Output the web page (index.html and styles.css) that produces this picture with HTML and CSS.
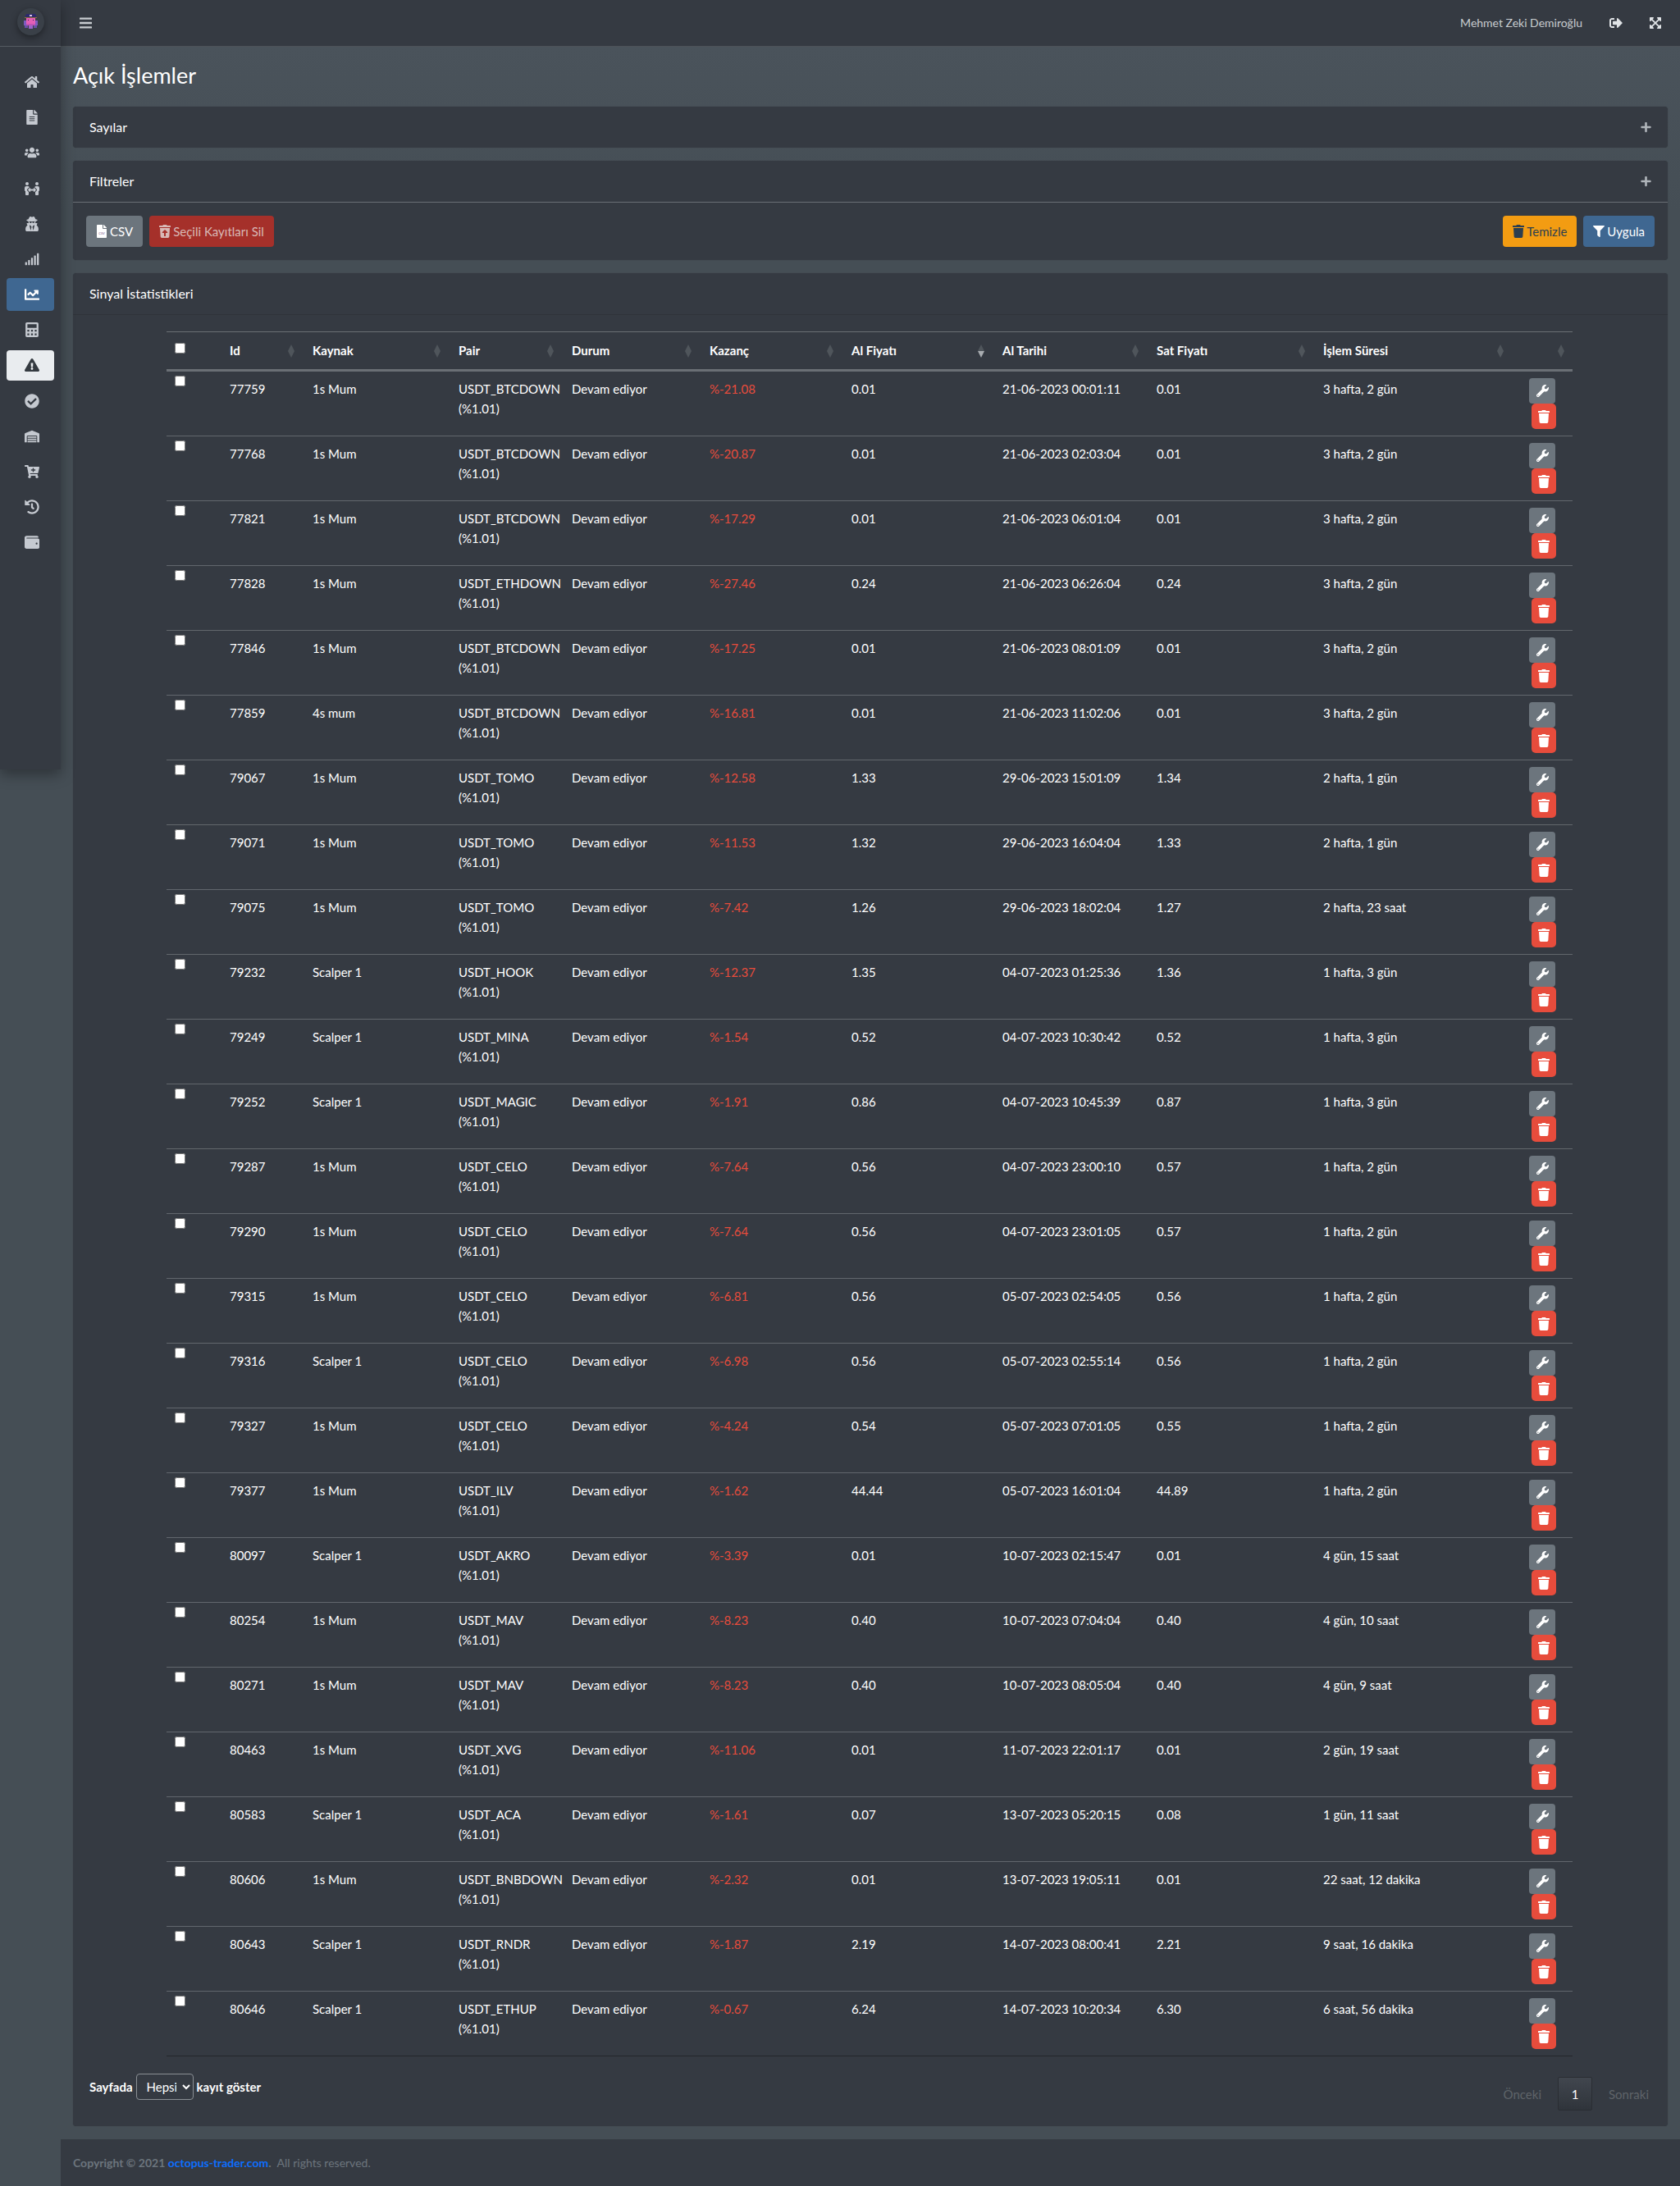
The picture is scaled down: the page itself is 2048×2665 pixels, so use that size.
FILE: index.html
```html
<!DOCTYPE html>
<html lang="tr">
<head>
<meta charset="utf-8">
<title>Açık İşlemler</title>
<link rel="stylesheet" href="styles.css">
</head>
<body>
<svg class="sprite" aria-hidden="true">
<symbol id="i-home" viewBox="0 0 576 512"><path d="M280.37 148.26L96 300.11V464a16 16 0 0 0 16 16l112.06-.29a16 16 0 0 0 15.92-16V368a16 16 0 0 1 16-16h64a16 16 0 0 1 16 16v95.64a16 16 0 0 0 16 16.05L464 480a16 16 0 0 0 16-16V300L295.67 148.26a12.19 12.19 0 0 0-15.3 0zM571.6 251.47L488 182.56V44.05a12 12 0 0 0-12-12h-56a12 12 0 0 0-12 12v72.61L318.47 43a48 48 0 0 0-61 0L4.34 251.47a12 12 0 0 0-1.6 16.9l25.5 31A12 12 0 0 0 45.15 301l235.22-193.74a12.19 12.19 0 0 1 15.3 0L530.9 301a12 12 0 0 0 16.9-1.6l25.5-31a12 12 0 0 0-1.7-16.93z"/></symbol>
<symbol id="i-file" viewBox="0 0 384 512"><path d="M224 136V0H24C10.7 0 0 10.7 0 24v464c0 13.3 10.7 24 24 24h336c13.3 0 24-10.7 24-24V160H248c-13.2 0-24-10.8-24-24zm64 236c0 6.6-5.4 12-12 12H108c-6.6 0-12-5.4-12-12v-8c0-6.6 5.4-12 12-12h168c6.6 0 12 5.4 12 12v8zm0-64c0 6.6-5.4 12-12 12H108c-6.6 0-12-5.4-12-12v-8c0-6.6 5.4-12 12-12h168c6.6 0 12 5.4 12 12v8zm0-72v8c0 6.6-5.4 12-12 12H108c-6.6 0-12-5.4-12-12v-8c0-6.6 5.4-12 12-12h168c6.6 0 12 5.4 12 12zm96-114.1v6.1H256V0h6.1c6.4 0 12.5 2.5 17 7l97.9 98c4.5 4.5 7 10.6 7 16.9z"/></symbol>
<symbol id="i-users" viewBox="0 0 640 512"><path d="M96 224c35.3 0 64-28.7 64-64s-28.7-64-64-64-64 28.7-64 64 28.7 64 64 64zm448 0c35.3 0 64-28.7 64-64s-28.7-64-64-64-64 28.7-64 64 28.7 64 64 64zm32 32h-64c-17.6 0-33.5 7.1-45.1 18.6 40.3 22.1 68.9 62 75.1 109.4h66c17.7 0 32-14.3 32-32v-32c0-35.3-28.7-64-64-64zm-256 0c61.9 0 112-50.1 112-112S381.9 32 320 32 208 82.1 208 144s50.1 112 112 112zm76.8 32h-8.3c-20.8 10-43.9 16-68.5 16s-47.6-6-68.5-16h-8.3C179.6 288 128 339.6 128 403.2V432c0 26.5 21.5 48 48 48h288c26.5 0 48-21.5 48-48v-28.8c0-63.6-51.6-115.2-115.2-115.2zm-223.7-13.4C161.5 263.1 145.6 256 128 256H64c-35.3 0-64 28.7-64 64v32c0 17.7 14.3 32 32 32h65.9c6.3-47.4 34.9-87.3 75.2-109.4z"/></symbol>
<symbol id="i-people" viewBox="0 0 576 512"><path d="M96,128A64,64,0,1,0,32,64,64,64,0,0,0,96,128Zm0,176.08a44.11,44.11,0,0,1,13.64-32L181.77,204c1.65-1.55,3.77-2.31,5.61-3.57A63.91,63.91,0,0,0,128,160H64A64,64,0,0,0,0,224V320a32,32,0,0,0,32,32V480a32,32,0,0,0,32,32h64a32,32,0,0,0,32-32V383.61l-50.36-47.53A44.08,44.08,0,0,1,96,304.08ZM480,128a64,64,0,1,0-64-64A64,64,0,0,0,480,128Zm32,32H448a63.91,63.91,0,0,0-59.38,40.42c1.84,1.27,4,2,5.62,3.59l72.12,68.06a44.37,44.37,0,0,1,0,64L416,383.62V480a32,32,0,0,0,32,32h64a32,32,0,0,0,32-32V352a32,32,0,0,0,32-32V224A64,64,0,0,0,512,160ZM444.4,295.34l-72.12-68.06A12,12,0,0,0,352,236v36H224V236a12,12,0,0,0-20.28-8.73L131.6,295.34a12.4,12.4,0,0,0,0,17.47l72.12,68.07A12,12,0,0,0,224,372.14V336H352v36.14a12,12,0,0,0,20.28,8.74l72.12-68.07A12.4,12.4,0,0,0,444.4,295.34Z"/></symbol>
<symbol id="i-secret" viewBox="0 0 448 512"><path d="M383.9 308.3l23.9-62.6c4-10.5-3.7-21.7-15-21.7h-58.5c11-18.9 17.8-40.6 17.8-64v-.3c39.2-7.8 64-19.1 64-31.7 0-13.3-27.3-25.1-70.1-33-9.2-32.8-27-65.8-40.6-82.8-9.5-11.9-25.9-15.6-39.5-8.8l-27.6 13.8c-9 4.5-19.6 4.5-28.6 0L182.1 3.4c-13.6-6.8-30-3.1-39.5 8.8-13.5 17-31.4 50-40.6 82.8-42.7 7.9-70 19.7-70 33 0 12.6 24.8 23.9 64 31.7v.3c0 23.4 6.8 45.1 17.8 64H56.3c-11.5 0-19.2 11.7-14.7 22.3l25.8 60.2C27.3 329.8 0 372.7 0 422.4v44.8C0 491.9 20.1 512 44.8 512h358.4c24.7 0 44.8-20.1 44.8-44.8v-44.8c0-48.4-25.8-90.4-64.1-114.1zM176 480l-41.6-192 49.6 32 24 40-32 120zm96 0l-32-120 24-40 49.6-32L272 480zm41.7-298.5c-3.9 11.9-7 24.6-16.5 33.4-10.1 9.3-48 22.4-64-25-2.8-8.4-15.4-8.4-18.3 0-17 50.2-56 32.4-64 25-9.5-8.8-12.7-21.5-16.5-33.4-.8-2.5-6.3-5.7-6.3-5.8v-10.8c28.3 3.6 61 5.8 96 5.8s67.7-2.2 96-5.8v10.8c-.1.1-5.6 3.2-6.4 5.8z"/></symbol>
<symbol id="i-signal" viewBox="0 0 640 512"><path d="M216 288h-48c-8.84 0-16 7.16-16 16v192c0 8.84 7.16 16 16 16h48c8.84 0 16-7.16 16-16V304c0-8.84-7.16-16-16-16zM88 384H40c-8.84 0-16 7.16-16 16v96c0 8.84 7.16 16 16 16h48c8.84 0 16-7.16 16-16v-96c0-8.84-7.16-16-16-16zm256-192h-48c-8.84 0-16 7.16-16 16v288c0 8.84 7.16 16 16 16h48c8.84 0 16-7.16 16-16V208c0-8.84-7.16-16-16-16zm128-96h-48c-8.84 0-16 7.16-16 16v384c0 8.84 7.16 16 16 16h48c8.84 0 16-7.16 16-16V112c0-8.84-7.16-16-16-16zM600 0h-48c-8.84 0-16 7.16-16 16v480c0 8.84 7.16 16 16 16h48c8.84 0 16-7.16 16-16V16c0-8.84-7.16-16-16-16z"/></symbol>
<symbol id="i-chart" viewBox="0 0 512 512"><path d="M496 384H64V80c0-8.84-7.16-16-16-16H16C7.16 64 0 71.16 0 80v336c0 17.67 14.33 32 32 32h464c8.84 0 16-7.16 16-16v-32c0-8.84-7.16-16-16-16zM464 96H345.94c-21.38 0-32.09 25.85-16.97 40.97l32.4 32.4L288 242.75l-73.37-73.37c-12.5-12.5-32.76-12.5-45.25 0l-68.69 68.69c-6.25 6.25-6.25 16.38 0 22.63l22.62 22.62c6.25 6.25 16.38 6.25 22.63 0L192 237.25l73.37 73.37c12.5 12.5 32.76 12.5 45.25 0l96-96 32.4 32.4c15.12 15.12 40.97 4.41 40.97-16.97V112c0-8.84-7.16-16-16-16z"/></symbol>
<symbol id="i-calc" viewBox="0 0 448 512"><path fill-rule="evenodd" d="M48 0h352c25.6 0 48 22.4 48 48v416c0 25.6-22.4 48-48 48H48c-25.6 0-48-22.4-48-48V48C0 22.4 22.4 0 48 0zm16 64v128h320V64zm0 192v64h64v-64zm128 0v64h64v-64zm128 0v64h64v-64zM64 384v64h64v-64zm128 0v64h64v-64zm128 0v64h64v-64z"/></symbol>
<symbol id="i-warn" viewBox="0 0 576 512"><path d="M569.517 440.013C587.975 472.007 564.806 512 527.94 512H48.054c-36.937 0-59.999-40.055-41.577-71.987L246.423 23.985c18.467-32.009 64.72-31.951 83.154 0l239.94 416.028zM288 354c-25.405 0-46 20.595-46 46s20.595 46 46 46 46-20.595 46-46-20.595-46-46-46zm-43.673-165.346l7.418 136c.347 6.364 5.609 11.346 11.982 11.346h48.546c6.373 0 11.635-4.982 11.982-11.346l7.418-136c.375-6.874-5.098-12.654-11.982-12.654h-63.383c-6.884 0-12.356 5.78-11.981 12.654z"/></symbol>
<symbol id="i-check" viewBox="0 0 512 512"><path d="M504 256c0 136.967-111.033 248-248 248S8 392.967 8 256 119.033 8 256 8s248 111.033 248 248zM227.314 387.314l184-184c6.248-6.248 6.248-16.379 0-22.627l-22.627-22.627c-6.248-6.249-16.379-6.249-22.628 0L216 308.118l-70.059-70.059c-6.248-6.248-16.379-6.248-22.628 0l-22.627 22.627c-6.248 6.248-6.248 16.379 0 22.627l104 104c6.249 6.249 16.379 6.249 22.628.001z"/></symbol>
<symbol id="i-warehouse" viewBox="0 0 640 512"><path d="M504 352H136.4c-4.4 0-8 3.6-8 8l-.1 48c0 4.4 3.6 8 8 8H504c4.4 0 8-3.6 8-8v-48c0-4.4-3.6-8-8-8zm0 96H136.1c-4.4 0-8 3.6-8 8l-.1 48c0 4.4 3.6 8 8 8h368c4.4 0 8-3.6 8-8v-48c0-4.4-3.6-8-8-8zm0-192H136.6c-4.4 0-8 3.6-8 8l-.1 48c0 4.4 3.6 8 8 8H504c4.4 0 8-3.6 8-8v-48c0-4.4-3.6-8-8-8zm106.5-139L338.4 3.7a48.15 48.15 0 0 0-36.9 0L29.5 117C11.7 124.5 0 141.9 0 161.3V504c0 4.4 3.6 8 8 8h80c4.4 0 8-3.6 8-8V256c0-17.6 14.6-32 32.6-32h382.8c18 0 32.6 14.4 32.6 32v248c0 4.4 3.6 8 8 8h80c4.4 0 8-3.6 8-8V161.3c0-19.4-11.7-36.8-29.5-44.3z"/></symbol>
<symbol id="i-cart" viewBox="0 0 576 512"><path d="M504.717 320H211.572l6.545 32h268.418c15.401 0 26.816 14.301 23.403 29.319l-5.517 24.276C523.112 414.668 536 433.828 536 456c0 31.202-25.519 56.444-56.824 55.994-29.823-.429-54.35-24.631-55.155-54.447-.44-16.287 6.085-31.049 16.803-41.548H231.176C241.553 426.165 248 440.326 248 456c0 31.813-26.528 57.431-58.67 55.938-28.54-1.325-51.751-24.385-53.251-52.917-1.158-22.034 10.436-41.455 28.051-51.586L93.883 64H24C10.745 64 0 53.255 0 40V24C0 10.745 10.745 0 24 0h102.529c11.401 0 21.228 8.021 23.513 19.19L159.208 64H551.99c15.401 0 26.816 14.301 23.403 29.319l-47.273 208C525.637 312.246 515.923 320 504.717 320zM408 168h-48v-40c0-8.837-7.163-16-16-16h-16c-8.837 0-16 7.163-16 16v40h-48c-8.837 0-16 7.163-16 16v16c0 8.837 7.163 16 16 16h48v40c0 8.837 7.163 16 16 16h16c8.837 0 16-7.163 16-16v-40h48c8.837 0 16-7.163 16-16v-16c0-8.837-7.163-16-16-16z"/></symbol>
<symbol id="i-history" viewBox="0 0 512 512"><path d="M504 255.531c.253 136.64-111.18 248.372-247.82 248.468-59.015.042-113.223-20.53-155.822-54.911-11.077-8.94-11.905-25.541-1.839-35.607l11.267-11.267c8.609-8.609 22.353-9.551 31.891-1.984C173.062 425.135 212.781 440 256 440c101.705 0 184-82.311 184-184 0-101.705-82.311-184-184-184-48.814 0-93.149 18.969-126.068 49.932l50.754 50.754c10.08 10.08 2.941 27.314-11.313 27.314H24c-8.837 0-16-7.163-16-16V38.627c0-14.254 17.234-21.393 27.314-11.314l49.372 49.372C129.209 34.136 189.552 8 256 8c136.81 0 247.747 110.78 248 247.531zm-180.912 78.784l9.823-12.63c8.138-10.463 6.253-25.542-4.21-33.679L288 256.349V152c0-13.255-10.745-24-24-24h-16c-13.255 0-24 10.745-24 24v135.651l65.409 50.874c10.463 8.137 25.541 6.253 33.679-4.21z"/></symbol>
<symbol id="i-wallet" viewBox="0 0 512 512"><path d="M461.2 128H80c-8.84 0-16-7.16-16-16s7.16-16 16-16h384c8.84 0 16-7.16 16-16 0-26.51-21.49-48-48-48H64C28.65 32 0 60.65 0 96v320c0 35.35 28.65 64 64 64h397.2c28.02 0 50.8-21.53 50.8-48V176c0-26.47-22.78-48-50.8-48zM416 336c-17.67 0-32-14.33-32-32s14.33-32 32-32 32 14.33 32 32-14.33 32-32 32z"/></symbol>
<symbol id="i-bars" viewBox="0 0 448 512"><path d="M16 132h416c8.837 0 16-7.163 16-16V76c0-8.837-7.163-16-16-16H16C7.163 60 0 67.163 0 76v40c0 8.837 7.163 16 16 16zm0 160h416c8.837 0 16-7.163 16-16v-40c0-8.837-7.163-16-16-16H16c-8.837 0-16 7.163-16 16v40c0 8.837 7.163 16 16 16zm0 160h416c8.837 0 16-7.163 16-16v-40c0-8.837-7.163-16-16-16H16c-8.837 0-16 7.163-16 16v40c0 8.837 7.163 16 16 16z"/></symbol>
<symbol id="i-signout" viewBox="0 0 512 512"><path d="M497 273L329 441c-15 15-41 4.5-41-17v-96H152c-13.3 0-24-10.7-24-24v-96c0-13.3 10.7-24 24-24h136V88c0-21.4 25.9-32 41-17l168 168c9.3 9.4 9.3 24.6 0 34zM192 436v-40c0-6.6-5.4-12-12-12H96c-17.7 0-32-14.3-32-32V160c0-17.7 14.3-32 32-32h84c6.6 0 12-5.4 12-12V76c0-6.6-5.4-12-12-12H96c-53 0-96 43-96 96v192c0 53 43 96 96 96h84c6.6 0 12-5.4 12-12z"/></symbol>
<symbol id="i-expand" viewBox="0 0 448 512"><path d="M448 344v112a23.94 23.94 0 0 1-24 24H312c-21.39 0-32.09-25.9-17-41l36.2-36.2L224 295.6 116.77 402.9 153 439c15.09 15.1 4.39 41-17 41H24a23.94 23.94 0 0 1-24-24V344c0-21.4 25.89-32.1 41-17l36.19 36.2L184.46 256 77.18 148.7 41 185c-15.1 15.1-41 4.4-41-17V56a23.94 23.94 0 0 1 24-24h112c21.39 0 32.09 25.9 17 41l-36.2 36.2L224 216.4l107.23-107.3L295 73c-15.09-15.1-4.39-41 17-41h112a23.94 23.94 0 0 1 24 24v112c0 21.4-25.89 32.1-41 17l-36.19-36.2L263.54 256l107.28 107.3L407 327.1c15.1-15.2 41-4.5 41 16.9z"/></symbol>
<symbol id="i-plus" viewBox="0 0 448 512"><path d="M416 208H272V64c0-17.67-14.33-32-32-32h-32c-17.67 0-32 14.33-32 32v144H32c-17.67 0-32 14.33-32 32v32c0 17.67 14.33 32 32 32h144v144c0 17.67 14.33 32 32 32h32c17.67 0 32-14.33 32-32V304h144c17.67 0 32-14.33 32-32v-32c0-17.67-14.33-32-32-32z"/></symbol>
<symbol id="i-trash" viewBox="0 0 448 512"><path d="M432 32H312l-9.4-18.7A24 24 0 0 0 281.1 0H166.8a23.72 23.72 0 0 0-21.4 13.3L136 32H16A16 16 0 0 0 0 48v32a16 16 0 0 0 16 16h416a16 16 0 0 0 16-16V48a16 16 0 0 0-16-16zM53.2 467a48 48 0 0 0 47.9 45h245.8a48 48 0 0 0 47.9-45L416 128H32z"/></symbol>
<symbol id="i-restore" viewBox="0 0 448 512"><path d="M53.2 467a48 48 0 0 0 47.9 45h245.8a48 48 0 0 0 47.9-45L416 128H32zm70.11-175.8l89.38-94.26a15.41 15.41 0 0 1 22.62 0l89.38 94.26c10.08 10.62 2.94 28.8-11.32 28.8H256v112a16 16 0 0 1-16 16h-32a16 16 0 0 1-16-16V320h-57.37c-14.26 0-21.4-18.18-11.32-28.8zM432 32H312l-9.4-18.7A24 24 0 0 0 281.1 0H166.8a23.72 23.72 0 0 0-21.4 13.3L136 32H16A16 16 0 0 0 0 48v32a16 16 0 0 0 16 16h416a16 16 0 0 0 16-16V48a16 16 0 0 0-16-16z"/></symbol>
<symbol id="i-filter" viewBox="0 0 512 512"><path d="M487.976 0H24.028C2.71 0-8.047 25.866 7.058 40.971L192 225.941V432c0 7.831 3.821 15.17 10.237 19.662l80 55.98C298.02 518.69 320 507.493 320 487.98V225.941l184.947-184.97C520.021 25.896 509.338 0 487.976 0z"/></symbol>
<symbol id="i-wrench" viewBox="0 0 512 512"><path d="M507.73 109.1c-2.24-9.03-13.54-12.09-20.12-5.51l-74.36 74.36-67.88-11.31-11.31-67.88 74.36-74.36c6.62-6.62 3.43-17.9-5.66-20.16-47.38-11.74-99.55.91-136.58 37.93-39.64 39.64-50.55 97.1-34.05 147.2L18.74 402.76c-24.99 24.99-24.99 65.51 0 90.5 24.99 24.99 65.51 24.99 90.5 0l213.21-213.21c50.12 16.71 107.47 5.68 147.37-34.22 37.07-37.07 49.7-89.32 37.91-136.73zM64 472c-13.25 0-24-10.75-24-24 0-13.26 10.75-24 24-24s24 10.74 24 24c0 13.25-10.75 24-24 24z"/></symbol>
</svg>
<div class="shell">
<aside class="sidebar">
<div class="brand">
<div class="logo">
<svg class="octopus" viewBox="0 0 16 18" shape-rendering="crispEdges">
<rect x="3" y="0" width="10" height="1" fill="#2d2a6b"/><rect x="2" y="1" width="12" height="3" fill="#2d2a6b"/><rect x="7" y="1" width="2" height="2" fill="#d9c3e8"/><rect x="1" y="4" width="14" height="1" fill="#8d6a3f"/>
<rect x="3" y="5" width="10" height="6" fill="#e45fb6"/><rect x="5" y="7" width="1" height="1" fill="#26224f"/><rect x="10" y="7" width="1" height="1" fill="#26224f"/>
<rect x="2" y="11" width="12" height="2" fill="#c253b4"/><rect x="0" y="8" width="3" height="5" fill="#7d5bc0"/><rect x="13" y="8" width="3" height="5" fill="#7d5bc0"/>
<rect x="1" y="13" width="4" height="3" fill="#6a4fa8"/><rect x="6" y="13" width="4" height="4" fill="#9d63c8"/><rect x="11" y="13" width="4" height="3" fill="#6a4fa8"/>
</svg>
</div>
</div>
<nav class="side-nav">
<a class="nav-item"><svg class="ico"><use href="#i-home"/></svg></a>
<a class="nav-item"><svg class="ico"><use href="#i-file"/></svg></a>
<a class="nav-item"><svg class="ico"><use href="#i-users"/></svg></a>
<a class="nav-item"><svg class="ico"><use href="#i-people"/></svg></a>
<a class="nav-item"><svg class="ico"><use href="#i-secret"/></svg></a>
<a class="nav-item"><svg class="ico"><use href="#i-signal"/></svg></a>
<a class="nav-item nav-blue"><svg class="ico"><use href="#i-chart"/></svg></a>
<a class="nav-item"><svg class="ico"><use href="#i-calc"/></svg></a>
<a class="nav-item nav-light"><svg class="ico"><use href="#i-warn"/></svg></a>
<a class="nav-item"><svg class="ico"><use href="#i-check"/></svg></a>
<a class="nav-item"><svg class="ico"><use href="#i-warehouse"/></svg></a>
<a class="nav-item"><svg class="ico"><use href="#i-cart"/></svg></a>
<a class="nav-item"><svg class="ico"><use href="#i-history"/></svg></a>
<a class="nav-item"><svg class="ico"><use href="#i-wallet"/></svg></a>
</nav>
</aside>
<div class="main">
<header class="topbar">
<svg class="ico bars"><use href="#i-bars"/></svg>
<div class="top-right">
<span class="user">Mehmet Zeki Demiroğlu</span>
<svg class="ico top-ico"><use href="#i-signout"/></svg>
<svg class="ico top-ico"><use href="#i-expand"/></svg>
</div>
</header>
<main class="content">
<h1 class="page-title">Açık İşlemler</h1>
<section class="card">
<div class="card-head head-plain"><span>Sayılar</span><svg class="ico plus"><use href="#i-plus"/></svg></div>
</section>
<section class="card">
<div class="card-head head-line"><span>Filtreler</span><svg class="ico plus"><use href="#i-plus"/></svg></div>
<div class="toolbar">
<div class="btn-group">
<button class="btn btn-gray"><svg class="ico btn-ico" viewBox="0 0 384 512"><path d="M224 136V0H24C10.7 0 0 10.7 0 24v464c0 13.3 10.7 24 24 24h336c13.3 0 24-10.7 24-24V160H248c-13.2 0-24-10.8-24-24zm160-14.1v6.1H256V0h6.1c6.4 0 12.5 2.5 17 7l97.9 98c4.5 4.5 7 10.6 7 16.9z" fill="#fff"/><text x="192" y="370" class="csv-mini">CSV</text></svg>CSV</button>
<button class="btn btn-red"><svg class="ico btn-ico"><use href="#i-restore"/></svg>Seçili Kayıtları Sil</button>
</div>
<div class="btn-group">
<button class="btn btn-amber"><svg class="ico btn-ico"><use href="#i-trash"/></svg>Temizle</button>
<button class="btn btn-blue"><svg class="ico btn-ico"><use href="#i-filter"/></svg>Uygula</button>
</div>
</div>
</section>
<section class="card card-table">
<div class="card-head head-dark"><span>Sinyal İstatistikleri</span></div>
<div class="table-wrap">
<table class="data">
<colgroup><col class="c-chk"><col class="c-id"><col class="c-src"><col class="c-pair"><col class="c-state"><col class="c-gain"><col class="c-buy"><col class="c-date"><col class="c-sell"><col class="c-dur"><col class="c-act"></colgroup>
<thead>
<tr><th class="th-chk"><input type="checkbox"></th><th>Id</th><th>Kaynak</th><th>Pair</th><th>Durum</th><th>Kazanç</th><th class="sorted">Al Fiyatı</th><th>Al Tarihi</th><th>Sat Fiyatı</th><th>İşlem Süresi</th><th></th></tr>
</thead>
<tbody>
<tr><td class="td-chk"><input type="checkbox"></td><td>77759</td><td>1s Mum</td><td>USDT_BTCDOWN<br>(%1.01)</td><td>Devam ediyor</td><td class="neg">%-21.08</td><td>0.01</td><td>21-06-2023 00:01:11</td><td>0.01</td><td>3 hafta, 2 gün</td><td class="acts"><a class="act act-w"><svg class="ico"><use href="#i-wrench"/></svg></a><a class="act act-t"><svg class="ico"><use href="#i-trash"/></svg></a></td></tr>
<tr><td class="td-chk"><input type="checkbox"></td><td>77768</td><td>1s Mum</td><td>USDT_BTCDOWN<br>(%1.01)</td><td>Devam ediyor</td><td class="neg">%-20.87</td><td>0.01</td><td>21-06-2023 02:03:04</td><td>0.01</td><td>3 hafta, 2 gün</td><td class="acts"><a class="act act-w"><svg class="ico"><use href="#i-wrench"/></svg></a><a class="act act-t"><svg class="ico"><use href="#i-trash"/></svg></a></td></tr>
<tr><td class="td-chk"><input type="checkbox"></td><td>77821</td><td>1s Mum</td><td>USDT_BTCDOWN<br>(%1.01)</td><td>Devam ediyor</td><td class="neg">%-17.29</td><td>0.01</td><td>21-06-2023 06:01:04</td><td>0.01</td><td>3 hafta, 2 gün</td><td class="acts"><a class="act act-w"><svg class="ico"><use href="#i-wrench"/></svg></a><a class="act act-t"><svg class="ico"><use href="#i-trash"/></svg></a></td></tr>
<tr><td class="td-chk"><input type="checkbox"></td><td>77828</td><td>1s Mum</td><td>USDT_ETHDOWN<br>(%1.01)</td><td>Devam ediyor</td><td class="neg">%-27.46</td><td>0.24</td><td>21-06-2023 06:26:04</td><td>0.24</td><td>3 hafta, 2 gün</td><td class="acts"><a class="act act-w"><svg class="ico"><use href="#i-wrench"/></svg></a><a class="act act-t"><svg class="ico"><use href="#i-trash"/></svg></a></td></tr>
<tr><td class="td-chk"><input type="checkbox"></td><td>77846</td><td>1s Mum</td><td>USDT_BTCDOWN<br>(%1.01)</td><td>Devam ediyor</td><td class="neg">%-17.25</td><td>0.01</td><td>21-06-2023 08:01:09</td><td>0.01</td><td>3 hafta, 2 gün</td><td class="acts"><a class="act act-w"><svg class="ico"><use href="#i-wrench"/></svg></a><a class="act act-t"><svg class="ico"><use href="#i-trash"/></svg></a></td></tr>
<tr><td class="td-chk"><input type="checkbox"></td><td>77859</td><td>4s mum</td><td>USDT_BTCDOWN<br>(%1.01)</td><td>Devam ediyor</td><td class="neg">%-16.81</td><td>0.01</td><td>21-06-2023 11:02:06</td><td>0.01</td><td>3 hafta, 2 gün</td><td class="acts"><a class="act act-w"><svg class="ico"><use href="#i-wrench"/></svg></a><a class="act act-t"><svg class="ico"><use href="#i-trash"/></svg></a></td></tr>
<tr><td class="td-chk"><input type="checkbox"></td><td>79067</td><td>1s Mum</td><td>USDT_TOMO<br>(%1.01)</td><td>Devam ediyor</td><td class="neg">%-12.58</td><td>1.33</td><td>29-06-2023 15:01:09</td><td>1.34</td><td>2 hafta, 1 gün</td><td class="acts"><a class="act act-w"><svg class="ico"><use href="#i-wrench"/></svg></a><a class="act act-t"><svg class="ico"><use href="#i-trash"/></svg></a></td></tr>
<tr><td class="td-chk"><input type="checkbox"></td><td>79071</td><td>1s Mum</td><td>USDT_TOMO<br>(%1.01)</td><td>Devam ediyor</td><td class="neg">%-11.53</td><td>1.32</td><td>29-06-2023 16:04:04</td><td>1.33</td><td>2 hafta, 1 gün</td><td class="acts"><a class="act act-w"><svg class="ico"><use href="#i-wrench"/></svg></a><a class="act act-t"><svg class="ico"><use href="#i-trash"/></svg></a></td></tr>
<tr><td class="td-chk"><input type="checkbox"></td><td>79075</td><td>1s Mum</td><td>USDT_TOMO<br>(%1.01)</td><td>Devam ediyor</td><td class="neg">%-7.42</td><td>1.26</td><td>29-06-2023 18:02:04</td><td>1.27</td><td>2 hafta, 23 saat</td><td class="acts"><a class="act act-w"><svg class="ico"><use href="#i-wrench"/></svg></a><a class="act act-t"><svg class="ico"><use href="#i-trash"/></svg></a></td></tr>
<tr><td class="td-chk"><input type="checkbox"></td><td>79232</td><td>Scalper 1</td><td>USDT_HOOK<br>(%1.01)</td><td>Devam ediyor</td><td class="neg">%-12.37</td><td>1.35</td><td>04-07-2023 01:25:36</td><td>1.36</td><td>1 hafta, 3 gün</td><td class="acts"><a class="act act-w"><svg class="ico"><use href="#i-wrench"/></svg></a><a class="act act-t"><svg class="ico"><use href="#i-trash"/></svg></a></td></tr>
<tr><td class="td-chk"><input type="checkbox"></td><td>79249</td><td>Scalper 1</td><td>USDT_MINA<br>(%1.01)</td><td>Devam ediyor</td><td class="neg">%-1.54</td><td>0.52</td><td>04-07-2023 10:30:42</td><td>0.52</td><td>1 hafta, 3 gün</td><td class="acts"><a class="act act-w"><svg class="ico"><use href="#i-wrench"/></svg></a><a class="act act-t"><svg class="ico"><use href="#i-trash"/></svg></a></td></tr>
<tr><td class="td-chk"><input type="checkbox"></td><td>79252</td><td>Scalper 1</td><td>USDT_MAGIC<br>(%1.01)</td><td>Devam ediyor</td><td class="neg">%-1.91</td><td>0.86</td><td>04-07-2023 10:45:39</td><td>0.87</td><td>1 hafta, 3 gün</td><td class="acts"><a class="act act-w"><svg class="ico"><use href="#i-wrench"/></svg></a><a class="act act-t"><svg class="ico"><use href="#i-trash"/></svg></a></td></tr>
<tr><td class="td-chk"><input type="checkbox"></td><td>79287</td><td>1s Mum</td><td>USDT_CELO<br>(%1.01)</td><td>Devam ediyor</td><td class="neg">%-7.64</td><td>0.56</td><td>04-07-2023 23:00:10</td><td>0.57</td><td>1 hafta, 2 gün</td><td class="acts"><a class="act act-w"><svg class="ico"><use href="#i-wrench"/></svg></a><a class="act act-t"><svg class="ico"><use href="#i-trash"/></svg></a></td></tr>
<tr><td class="td-chk"><input type="checkbox"></td><td>79290</td><td>1s Mum</td><td>USDT_CELO<br>(%1.01)</td><td>Devam ediyor</td><td class="neg">%-7.64</td><td>0.56</td><td>04-07-2023 23:01:05</td><td>0.57</td><td>1 hafta, 2 gün</td><td class="acts"><a class="act act-w"><svg class="ico"><use href="#i-wrench"/></svg></a><a class="act act-t"><svg class="ico"><use href="#i-trash"/></svg></a></td></tr>
<tr><td class="td-chk"><input type="checkbox"></td><td>79315</td><td>1s Mum</td><td>USDT_CELO<br>(%1.01)</td><td>Devam ediyor</td><td class="neg">%-6.81</td><td>0.56</td><td>05-07-2023 02:54:05</td><td>0.56</td><td>1 hafta, 2 gün</td><td class="acts"><a class="act act-w"><svg class="ico"><use href="#i-wrench"/></svg></a><a class="act act-t"><svg class="ico"><use href="#i-trash"/></svg></a></td></tr>
<tr><td class="td-chk"><input type="checkbox"></td><td>79316</td><td>Scalper 1</td><td>USDT_CELO<br>(%1.01)</td><td>Devam ediyor</td><td class="neg">%-6.98</td><td>0.56</td><td>05-07-2023 02:55:14</td><td>0.56</td><td>1 hafta, 2 gün</td><td class="acts"><a class="act act-w"><svg class="ico"><use href="#i-wrench"/></svg></a><a class="act act-t"><svg class="ico"><use href="#i-trash"/></svg></a></td></tr>
<tr><td class="td-chk"><input type="checkbox"></td><td>79327</td><td>1s Mum</td><td>USDT_CELO<br>(%1.01)</td><td>Devam ediyor</td><td class="neg">%-4.24</td><td>0.54</td><td>05-07-2023 07:01:05</td><td>0.55</td><td>1 hafta, 2 gün</td><td class="acts"><a class="act act-w"><svg class="ico"><use href="#i-wrench"/></svg></a><a class="act act-t"><svg class="ico"><use href="#i-trash"/></svg></a></td></tr>
<tr><td class="td-chk"><input type="checkbox"></td><td>79377</td><td>1s Mum</td><td>USDT_ILV<br>(%1.01)</td><td>Devam ediyor</td><td class="neg">%-1.62</td><td>44.44</td><td>05-07-2023 16:01:04</td><td>44.89</td><td>1 hafta, 2 gün</td><td class="acts"><a class="act act-w"><svg class="ico"><use href="#i-wrench"/></svg></a><a class="act act-t"><svg class="ico"><use href="#i-trash"/></svg></a></td></tr>
<tr><td class="td-chk"><input type="checkbox"></td><td>80097</td><td>Scalper 1</td><td>USDT_AKRO<br>(%1.01)</td><td>Devam ediyor</td><td class="neg">%-3.39</td><td>0.01</td><td>10-07-2023 02:15:47</td><td>0.01</td><td>4 gün, 15 saat</td><td class="acts"><a class="act act-w"><svg class="ico"><use href="#i-wrench"/></svg></a><a class="act act-t"><svg class="ico"><use href="#i-trash"/></svg></a></td></tr>
<tr><td class="td-chk"><input type="checkbox"></td><td>80254</td><td>1s Mum</td><td>USDT_MAV<br>(%1.01)</td><td>Devam ediyor</td><td class="neg">%-8.23</td><td>0.40</td><td>10-07-2023 07:04:04</td><td>0.40</td><td>4 gün, 10 saat</td><td class="acts"><a class="act act-w"><svg class="ico"><use href="#i-wrench"/></svg></a><a class="act act-t"><svg class="ico"><use href="#i-trash"/></svg></a></td></tr>
<tr><td class="td-chk"><input type="checkbox"></td><td>80271</td><td>1s Mum</td><td>USDT_MAV<br>(%1.01)</td><td>Devam ediyor</td><td class="neg">%-8.23</td><td>0.40</td><td>10-07-2023 08:05:04</td><td>0.40</td><td>4 gün, 9 saat</td><td class="acts"><a class="act act-w"><svg class="ico"><use href="#i-wrench"/></svg></a><a class="act act-t"><svg class="ico"><use href="#i-trash"/></svg></a></td></tr>
<tr><td class="td-chk"><input type="checkbox"></td><td>80463</td><td>1s Mum</td><td>USDT_XVG<br>(%1.01)</td><td>Devam ediyor</td><td class="neg">%-11.06</td><td>0.01</td><td>11-07-2023 22:01:17</td><td>0.01</td><td>2 gün, 19 saat</td><td class="acts"><a class="act act-w"><svg class="ico"><use href="#i-wrench"/></svg></a><a class="act act-t"><svg class="ico"><use href="#i-trash"/></svg></a></td></tr>
<tr><td class="td-chk"><input type="checkbox"></td><td>80583</td><td>Scalper 1</td><td>USDT_ACA<br>(%1.01)</td><td>Devam ediyor</td><td class="neg">%-1.61</td><td>0.07</td><td>13-07-2023 05:20:15</td><td>0.08</td><td>1 gün, 11 saat</td><td class="acts"><a class="act act-w"><svg class="ico"><use href="#i-wrench"/></svg></a><a class="act act-t"><svg class="ico"><use href="#i-trash"/></svg></a></td></tr>
<tr><td class="td-chk"><input type="checkbox"></td><td>80606</td><td>1s Mum</td><td>USDT_BNBDOWN<br>(%1.01)</td><td>Devam ediyor</td><td class="neg">%-2.32</td><td>0.01</td><td>13-07-2023 19:05:11</td><td>0.01</td><td>22 saat, 12 dakika</td><td class="acts"><a class="act act-w"><svg class="ico"><use href="#i-wrench"/></svg></a><a class="act act-t"><svg class="ico"><use href="#i-trash"/></svg></a></td></tr>
<tr><td class="td-chk"><input type="checkbox"></td><td>80643</td><td>Scalper 1</td><td>USDT_RNDR<br>(%1.01)</td><td>Devam ediyor</td><td class="neg">%-1.87</td><td>2.19</td><td>14-07-2023 08:00:41</td><td>2.21</td><td>9 saat, 16 dakika</td><td class="acts"><a class="act act-w"><svg class="ico"><use href="#i-wrench"/></svg></a><a class="act act-t"><svg class="ico"><use href="#i-trash"/></svg></a></td></tr>
<tr><td class="td-chk"><input type="checkbox"></td><td>80646</td><td>Scalper 1</td><td>USDT_ETHUP<br>(%1.01)</td><td>Devam ediyor</td><td class="neg">%-0.67</td><td>6.24</td><td>14-07-2023 10:20:34</td><td>6.30</td><td>6 saat, 56 dakika</td><td class="acts"><a class="act act-w"><svg class="ico"><use href="#i-wrench"/></svg></a><a class="act act-t"><svg class="ico"><use href="#i-trash"/></svg></a></td></tr>
</tbody>
</table>
</div>
<div class="table-foot">
<label class="page-len">Sayfada <select class="len-select"><option>Hepsi</option></select> kayıt göster</label>
<div class="pager"><span class="pg-link">Önceki</span><span class="pg-cur">1</span><span class="pg-link">Sonraki</span></div>
</div>
</section>
</main>
<footer class="foot"><b>Copyright © 2021 <a class="foot-link">octopus-trader.com</a>.</b> All rights reserved.</footer>
</div>
</div>
</body>
</html>
```
FILE: styles.css
```css
* { box-sizing: border-box; }
html, body { margin: 0; padding: 0; }
body {
  background: #454e55;
  color: #fff;
  font-family: "Lato", "Liberation Sans", sans-serif;
  font-size: 15px;
  line-height: 24px;
}
.sprite { display: none; }
.ico { display: inline-block; width: 18px; height: 18px; fill: currentColor; }
.shell { display: flex; align-items: flex-start; width: 2048px; height: 2665px; overflow: hidden; }

.sidebar {
  position: relative;
  z-index: 2;
  flex: 0 0 74px;
  height: 938px;
  background: #353a42;
  box-shadow: 0 6px 16px rgba(0, 0, 0, .35);
}
.brand { height: 57px; border-bottom: 1px solid #555b62; display: flex; justify-content: center; align-items: flex-start; padding-top: 10px; }
.logo { width: 33px; height: 33px; border-radius: 50%; background: #3a4048; box-shadow: 0 3px 8px rgba(0, 0, 0, .4); display: flex; align-items: center; justify-content: center; }
.octopus { width: 17px; height: 19px; }
.side-nav { display: flex; flex-direction: column; gap: 3.2px; padding: 23px 8px 0; }
.nav-item { height: 40px; border-radius: 4px; display: flex; align-items: center; justify-content: center; color: #c5c9d0; padding-left: 3px; }
.nav-blue { background: #3f6791; color: #fff; }
.nav-light { background: #e9ecef; color: #343a40; height: 37px; margin: 1px 0 2px; }

.main { flex: 1; min-width: 0; height: 2665px; display: flex; flex-direction: column; }
.topbar { flex: 0 0 57px; background: #353a42; border-bottom: 1px solid #4d5359; display: flex; align-items: center; justify-content: space-between; padding: 0 22px 1px 23px; }
.bars { width: 15px; height: 18px; color: #c8ccd0; }
.top-right { display: flex; align-items: center; color: #c8ccd0; }
.user { font-size: 14px; margin-right: 33px; }
.top-ico { width: 16px; height: 16px; margin-left: 32px; color: #e0e3e6; }
.top-ico:first-of-type { margin-left: 0; }

.content { flex: 1; padding: 0 15px; display: flex; flex-direction: column; gap: 16px; background: linear-gradient(#4a535b, #454e55 200px); }
.page-title { margin: 0; height: 57px; padding-top: 18px; font-size: 27px; font-weight: 400; line-height: 34px; margin-bottom: 0; }
.card { background: #353a42; border-radius: 4px; box-shadow: 0 0 1px rgba(0, 0, 0, .3); }
.card-head { height: 50px; padding: 0 20px; display: flex; align-items: center; justify-content: space-between; font-size: 16px; }
.head-line { border-bottom: 1px solid #6a6f75; height: 51px; }
.head-dark { border-bottom: 1px solid #2f3339; height: 51px; }
.plus { width: 13px; height: 14px; color: #b0b5ba; }
.toolbar { display: flex; justify-content: space-between; padding: 16px 16px 16px; }
.btn-group { display: flex; gap: 8px; }
.btn { height: 38px; border: 0; border-radius: 4px; padding: 0 12px; font: inherit; font-size: 15px; color: #fff; display: flex; align-items: center; gap: 3px; }
.btn-ico { width: 14px; height: 16px; }
.btn-gray { background: #6c757d; }
.btn-red { background: #a5302a; color: #d8b9b6; }
.btn-amber { background: #f39c12; color: #2c3e50; }
.btn-blue { background: #3f6791; }
.csv-mini { font-size: 130px; font-family: "Lato", sans-serif; text-anchor: middle; fill: #7a5a8f; }

.card-table { flex: 1; }
.table-wrap { padding: 20px 116px 0 114px; }
.data { width: 1714px; table-layout: fixed; border-collapse: collapse; }
.c-chk { width: 65px; } .c-id { width: 101px; } .c-src { width: 178px; } .c-pair { width: 138px; } .c-state { width: 168px; }
.c-gain { width: 173px; } .c-buy { width: 184px; } .c-date { width: 188px; } .c-sell { width: 203px; } .c-dur { width: 242px; } .c-act { width: 74px; }
.data th { position: relative; height: 47px; padding: 0 12px 2px; text-align: left; font-weight: 700; font-size: 15px; border-top: 1px solid #6a6f75; border-bottom: 3px solid #6a6f75; white-space: nowrap; }
.data th::before, .data th::after { content: ""; position: absolute; right: 10px; width: 0; height: 0; border-left: 4px solid transparent; border-right: 4px solid transparent; }
.data th::before { top: 15px; border-bottom: 8px solid #4f555b; }
.data th::after { top: 23px; border-top: 8px solid #4f555b; }
.data th.sorted::after { border-top-color: #a9adb1; }
.data th.th-chk::before, .data th.th-chk::after { display: none; }
.data td { padding: 9px 12px 0; vertical-align: top; border-bottom: 1px solid #62676d; }
.data tr:last-child td { border-bottom-color: #23262a; }
.data input { display: block; width: 13px; height: 13px; margin: 0; }
.data th.th-chk { padding: 0 0 6px 10px; }
.data td.td-chk { padding: 5px 0 0 10px; }
.data th.th-chk input { margin-top: 0; }
.neg { color: #e74c3c; }
.data td.acts { padding: 8px 0 8px 21px; }
.act { display: flex; align-items: center; justify-content: center; height: 31px; border-radius: 4px; color: #fff; }
.act .ico { width: 15px; height: 15px; }
.act-w { width: 32px; background: #6c757d; }
.act-t { width: 30px; margin-left: 3px; background: #e74c3c; border-radius: 5px; }
.act-t .ico { width: 14px; height: 16px; }
.table-foot { display: flex; justify-content: space-between; align-items: flex-start; padding: 21px 23px 0 20px; }
.page-len { font-weight: 700; font-size: 15px; display: flex; align-items: center; gap: 4px; }
.len-select { width: 70px; height: 32px; background: #353a42; color: #fff; border: 1px solid #8a8f94; border-radius: 4px; font: 400 15px "Lato", sans-serif; padding: 0 4px 0 8px; }
.pager { display: flex; align-items: center; margin-top: 4px; color: #5f6469; }
.pg-link { font-size: 15px; }
.pg-cur { width: 42px; height: 41px; margin: 0 20px; display: flex; align-items: center; justify-content: center; color: #fff; border: 1px solid #2a2d33; border-radius: 2px; background: linear-gradient(#41464e, #2f343b); }

.foot { flex: 0 0 57px; margin-top: 16px; background: #353a42; padding: 0 15px; display: flex; align-items: center; gap: 4px; color: #6c757d; font-size: 14px; white-space: pre; }
.foot-link { color: #0d6efd; }
```
